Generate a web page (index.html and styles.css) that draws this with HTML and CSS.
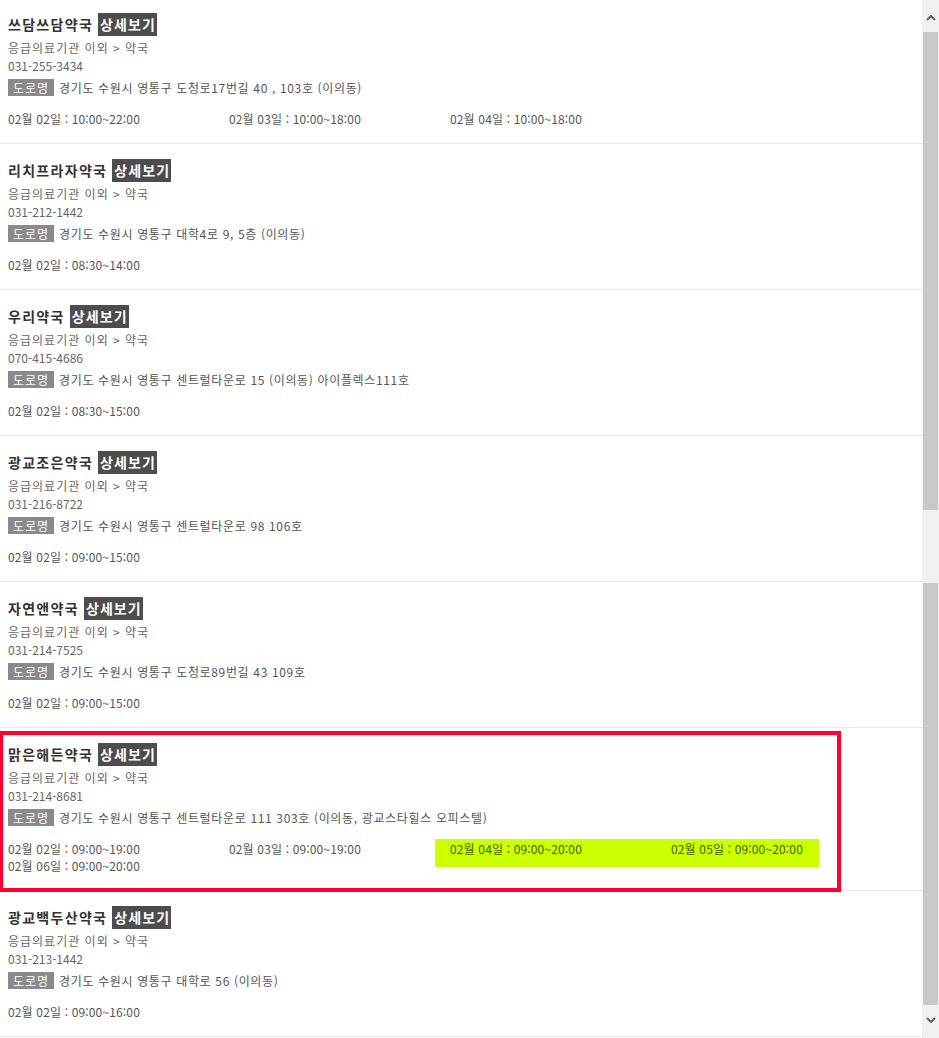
FILE: index.html
```html
<!DOCTYPE html>
<html lang="ko">
<head>
  <meta charset="UTF-8">
  <title>약국 목록</title>
  <link rel="stylesheet" href="styles.css">
</head>
<body>
  <div class="page">
    <div class="list">

      <div class="item">
        <div class="title">쓰담쓰담약국 <span class="more">상세보기</span></div>
        <div class="cate">응급의료기관 이외 &gt; 약국</div>
        <div class="tel">031-255-3434</div>
        <div class="addr"><span class="road">도로명</span>경기도 수원시 영통구 도청로17번길 40 , 103호 (이의동)</div>
        <div class="hours">
          <span class="slot">02월 02일 : 10:00~22:00</span>
          <span class="slot">02월 03일 : 10:00~18:00</span>
          <span class="slot">02월 04일 : 10:00~18:00</span>
        </div>
      </div>

      <div class="item">
        <div class="title">리치프라자약국 <span class="more">상세보기</span></div>
        <div class="cate">응급의료기관 이외 &gt; 약국</div>
        <div class="tel">031-212-1442</div>
        <div class="addr"><span class="road">도로명</span>경기도 수원시 영통구 대학4로 9, 5층 (이의동)</div>
        <div class="hours">
          <span class="slot">02월 02일 : 08:30~14:00</span>
        </div>
      </div>

      <div class="item">
        <div class="title">우리약국 <span class="more">상세보기</span></div>
        <div class="cate">응급의료기관 이외 &gt; 약국</div>
        <div class="tel">070-415-4686</div>
        <div class="addr"><span class="road">도로명</span>경기도 수원시 영통구 센트럴타운로 15 (이의동) 아이플렉스111호</div>
        <div class="hours">
          <span class="slot">02월 02일 : 08:30~15:00</span>
        </div>
      </div>

      <div class="item">
        <div class="title">광교조은약국 <span class="more">상세보기</span></div>
        <div class="cate">응급의료기관 이외 &gt; 약국</div>
        <div class="tel">031-216-8722</div>
        <div class="addr"><span class="road">도로명</span>경기도 수원시 영통구 센트럴타운로 98 106호</div>
        <div class="hours">
          <span class="slot">02월 02일 : 09:00~15:00</span>
        </div>
      </div>

      <div class="item">
        <div class="title">자연앤약국 <span class="more">상세보기</span></div>
        <div class="cate">응급의료기관 이외 &gt; 약국</div>
        <div class="tel">031-214-7525</div>
        <div class="addr"><span class="road">도로명</span>경기도 수원시 영통구 도청로89번길 43 109호</div>
        <div class="hours">
          <span class="slot">02월 02일 : 09:00~15:00</span>
        </div>
      </div>

      <div class="item selected">
        <div class="title">맑은해든약국 <span class="more">상세보기</span></div>
        <div class="cate">응급의료기관 이외 &gt; 약국</div>
        <div class="tel">031-214-8681</div>
        <div class="addr"><span class="road">도로명</span>경기도 수원시 영통구 센트럴타운로 111 303호 (이의동, 광교스타힐스 오피스텔)</div>
        <div class="hours">
          <span class="slot">02월 02일 : 09:00~19:00</span>
          <span class="slot">02월 03일 : 09:00~19:00</span>
          <span class="mark">
            <span class="slot">02월 04일 : 09:00~20:00</span>
            <span class="slot">02월 05일 : 09:00~20:00</span>
          </span>
          <span class="slot">02월 06일 : 09:00~20:00</span>
        </div>
        <div class="frame"></div>
      </div>

      <div class="item">
        <div class="title">광교백두산약국 <span class="more">상세보기</span></div>
        <div class="cate">응급의료기관 이외 &gt; 약국</div>
        <div class="tel">031-213-1442</div>
        <div class="addr"><span class="road">도로명</span>경기도 수원시 영통구 대학로 56 (이의동)</div>
        <div class="hours">
          <span class="slot">02월 02일 : 09:00~16:00</span>
        </div>
      </div>

    </div>

    <div class="scrollbar">
      <div class="arrow up">
        <svg width="10" height="6" viewBox="0 0 10 6"><polyline points="1,5 5,1 9,5" fill="none" stroke="#606060" stroke-width="2"/></svg>
      </div>
      <div class="thumb first"></div>
      <div class="gap"></div>
      <div class="thumb second"></div>
      <div class="arrow down">
        <svg width="10" height="6" viewBox="0 0 10 6"><polyline points="1,1 5,5 9,1" fill="none" stroke="#606060" stroke-width="2"/></svg>
      </div>
    </div>
  </div>
</body>
</html>
```

FILE: styles.css
```css
html, body {
  margin: 0;
  padding: 0;
  height: 100%;
  overflow: hidden;
  background: #fff;
  font-family: "Noto Sans CJK KR", "Liberation Sans", sans-serif;
  color: #555;
}

.page {
  display: flex;
  height: 1038px;
}

/* ─────────── list ─────────── */
.list {
  width: 922px;
  margin-top: -2px;
}

.item {
  position: relative;
  padding: 15px 0 16px 8px;
  border-bottom: 1px solid #e8e8e8;
}

.title {
  height: 23px;
  display: flex;
  align-items: center;
  gap: 5px;
  font-size: 14px;
  font-weight: bold;
  color: #333;
  line-height: 23px;
  letter-spacing: 1.3px;
}
.title .more {
  background: #4d4d4d;
  color: #fff;
  padding: 0 1px 0 2px;
  height: 23px;
  letter-spacing: 1.1px;
}

.cate, .tel {
  font-size: 12px;
  line-height: 18px;
  color: #666;
}
.cate {
  margin-top: 3px;
  letter-spacing: 1px;
}

.addr {
  margin-top: 4px;
  display: flex;
  align-items: center;
  height: 17px;
  font-size: 12px;
  color: #555;
  letter-spacing: 0.65px;
}
.road {
  background: #8a8a8a;
  color: #fff;
  width: 46px;
  height: 17px;
  line-height: 17px;
  text-align: center;
  margin-right: 5px;
  flex-shrink: 0;
  letter-spacing: 1px;
}

.hours {
  margin-top: 14px;
  display: flex;
  flex-wrap: wrap;
  align-items: flex-start;
  font-size: 12px;
  line-height: 17px;
  color: #555;
  letter-spacing: 0.15px;
}
.slot {
  width: 221px;
  flex-shrink: 0;
}

.mark {
  display: flex;
  width: 384px;
  height: 28px;
  box-sizing: border-box;
  margin: -1px 0 -10px -15px;
  padding: 1px 0 0 15px;
  background: #ccff00;
  color: #4a5a00;
  overflow: hidden;
}
.mark .slot:last-child {
  width: auto;
}

/* red selection frame drawn over the item */
.frame {
  position: absolute;
  left: 0;
  top: 3px;
  width: 841px;
  height: 161px;
  box-sizing: border-box;
  border: 4px solid #ff0033;
  border-left-width: 3px;
  pointer-events: none;
}

/* ─────────── scrollbar ─────────── */
.scrollbar {
  width: 17px;
  background: #f0f0f0;
  display: flex;
  flex-direction: column;
  align-items: center;
}
.arrow {
  display: flex;
  justify-content: center;
  width: 17px;
}
.arrow.up {
  height: 32px;
  align-items: center;
  padding-top: 4px;
  box-sizing: border-box;
}
.arrow.down {
  height: 30px;
  align-items: center;
}
.thumb {
  width: 15px;
  background: #c8c8c8;
}
.thumb.first {
  height: 478px;
}
.gap {
  height: 73px;
}
.thumb.second {
  height: 422px;
}
```
